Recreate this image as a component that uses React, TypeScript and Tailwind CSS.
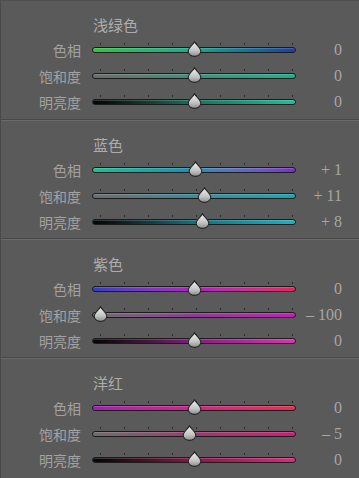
import React from 'react';

type Row = { label: string; value: number; text: string; track: string };
type Section = { title: string; rows: Row[] };

const SECTIONS: Section[] = [
  {
    title: '浅绿色',
    rows: [
      { label: '色相', value: 0, text: '0', track: 'bg-linear-to-r from-[#33c53e] via-[#1ca88c] to-[#1f3c9e]' },
      { label: '饱和度', value: 0, text: '0', track: 'bg-linear-to-r from-[#6c6c6c] via-[#3f8f7c] to-[#18b08e]' },
      { label: '明亮度', value: 0, text: '0', track: 'bg-linear-to-r from-[#050505] via-[#14745e] to-[#1ec09a]' },
    ],
  },
  {
    title: '蓝色',
    rows: [
      { label: '色相', value: 1, text: '+ 1', track: 'bg-linear-to-r from-[#22c08e] via-[#1b8fb4] to-[#7a2ec8]' },
      { label: '饱和度', value: 11, text: '+ 11', track: 'bg-linear-to-r from-[#6c6c6c] via-[#3e8a96] to-[#18a6b4]' },
      { label: '明亮度', value: 8, text: '+ 8', track: 'bg-linear-to-r from-[#050505] via-[#147080] to-[#1cb2c0]' },
    ],
  },
  {
    title: '紫色',
    rows: [
      { label: '色相', value: 0, text: '0', track: 'bg-linear-to-r from-[#2e3ec6] via-[#b01cc4] to-[#e82260]' },
      { label: '饱和度', value: -100, text: '– 100', track: 'bg-linear-to-r from-[#6c6c6c] via-[#8e3a96] to-[#c21cb8]' },
      { label: '明亮度', value: 0, text: '0', track: 'bg-linear-to-r from-[#050505] via-[#8a1a80] to-[#dc34b4]' },
    ],
  },
  {
    title: '洋红',
    rows: [
      { label: '色相', value: 0, text: '0', track: 'bg-linear-to-r from-[#a41cb8] via-[#d42088] to-[#e8304c]' },
      { label: '饱和度', value: -5, text: '– 5', track: 'bg-linear-to-r from-[#6c6c6c] via-[#963a6e] to-[#cc1c74]' },
      { label: '明亮度', value: 0, text: '0', track: 'bg-linear-to-r from-[#050505] via-[#8a1648] to-[#dc2c80]' },
    ],
  },
];

const TICKS = [0, 1, 2, 3, 4, 5, 6, 7, 8];

function Thumb() {
  return (
    <svg width="15" height="16" viewBox="0 0 15 16">
      <defs>
        <linearGradient id="thumbFill" x1="0" y1="0" x2="0" y2="1">
          <stop offset="0" stopColor="#f2f2f2" />
          <stop offset="0.6" stopColor="#c4c4c4" />
          <stop offset="1" stopColor="#8c8c8c" />
        </linearGradient>
      </defs>
      <path
        d="M7.5 0.8 C8.6 3.4 13.8 6.8 13.8 10.3 A6.3 5.1 0 0 1 1.2 10.3 C1.2 6.8 6.4 3.4 7.5 0.8 Z"
        fill="url(#thumbFill)"
        stroke="#262626"
        strokeWidth="1.1"
      />
    </svg>
  );
}

function Slider({ row }: { row: Row }) {
  // thumb centre within the 204px track
  const left = 102.5 + row.value * 0.945 - 7.5;
  return (
    <div className="relative w-[204px] h-[26px]">
      {TICKS.map((t) => (
        <div
          key={t}
          className="absolute top-[6px] w-px h-[2px] bg-[#2c2c2c]"
          style={{ left: 8 + t * 24 }}
        />
      ))}
      <div
        className={`absolute left-0 right-0 top-[10px] h-[6px] rounded-full border border-[#1c1c1c] shadow-[inset_0_1px_0_rgba(255,255,255,0.18)] ${row.track}`}
      />
      <div className="absolute top-[4px]" style={{ left }}>
        <Thumb />
      </div>
    </div>
  );
}

export default function App() {
  return (
    <div className="w-[359px] h-[478px] overflow-hidden bg-[#5a5a5a] border-l border-[#4a4a4a] border-t border-t-[#505050]">
      {SECTIONS.map((s, i) => (
        <div
          key={s.title}
          className={`flex flex-col pt-[15px] h-[119px] ${i > 0 ? 'border-t border-t-[#6a6a6a]' : ''} ${i < 3 ? 'border-b border-b-[#474747]' : ''}`}
        >
          <div className="pl-[92px] h-[18px] leading-[18px] text-[15px] text-[#acacac] font-['Noto_Sans_CJK_SC',sans-serif]">
            {s.title}
          </div>
          <div className="mt-[3px] flex flex-col">
            {s.rows.map((r) => (
              <div key={r.label} className="flex items-center h-[26px]">
                <div className="w-[80px] text-right text-[14px] leading-none text-[#a2a2a2] font-['Noto_Sans_CJK_SC',sans-serif]">
                  {r.label}
                </div>
                <div className="ml-[11px]">
                  <Slider row={r} />
                </div>
                <div className="w-[46px] text-right text-[16px] leading-none text-[#a6a6a6] font-['Liberation_Serif',serif]">
                  {r.text}
                </div>
              </div>
            ))}
          </div>
        </div>
      ))}
    </div>
  );
}
